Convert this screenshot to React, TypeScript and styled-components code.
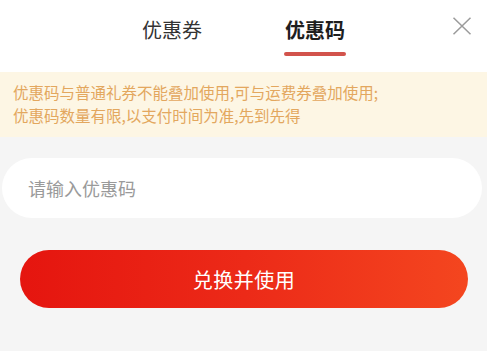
import styled, { createGlobalStyle } from "styled-components";

const GlobalStyle = createGlobalStyle`
  html, body {
    margin: 0;
    padding: 0;
    background: #f5f5f5;
  }
  body {
    font-family: "Noto Sans CJK SC", "Noto Sans", sans-serif;
  }
`;

const tabs = ["优惠券", "优惠码"];

function App() {
  return (
    <Page>
      <GlobalStyle />
      <Header>
        <Tabs>
          {tabs.map((label, index) => (
            <Tab key={label} active={index === 1}>
              <span>{label}</span>
              <Underline active={index === 1} />
            </Tab>
          ))}
        </Tabs>
        <CloseButton aria-label="close">
          <svg width="20" height="18" viewBox="0 0 20 18">
            <path d="M1.5 0.8 L18.5 17.2 M18.5 0.8 L1.5 17.2" stroke="#9b9b9b" strokeWidth="1.5" fill="none" />
          </svg>
        </CloseButton>
      </Header>
      <Notice>
        <p>优惠码与普通礼券不能叠加使用,可与运费券叠加使用;</p>
        <p>优惠码数量有限,以支付时间为准,先到先得</p>
      </Notice>
      <Body>
        <CodeInput placeholder="请输入优惠码" />
        <SubmitButton type="button">兑换并使用</SubmitButton>
      </Body>
    </Page>
  );
}

export default App;

const Page = styled.div`
  width: 487px;
  height: 351px;
  background: #f5f5f5;
  overflow: hidden;
`;

const Header = styled.div`
  display: grid;
  grid-template-columns: 1fr auto 1fr;
  height: 72px;
  background: #fff;
`;

const Tabs = styled.div`
  grid-column: 2;
  display: flex;
  gap: 81px;
  padding-top: 16px;
`;

interface ActiveProps {
  active: boolean;
}

const Tab = styled.div<ActiveProps>`
  display: flex;
  flex-direction: column;
  align-items: center;
  font-size: 20px;
  line-height: 28px;
  color: ${(p) => (p.active ? "#1e1e1e" : "#333")};
  font-weight: ${(p) => (p.active ? 700 : 400)};
`;

const Underline = styled.div<ActiveProps>`
  margin-top: 8px;
  width: 62px;
  height: 3.5px;
  border-radius: 2px;
  background: ${(p) => (p.active ? "#d2534c" : "transparent")};
`;

const CloseButton = styled.button`
  grid-column: 3;
  justify-self: end;
  align-self: start;
  margin: 17px 15px 0 0;
  padding: 0;
  border: none;
  background: none;
  display: flex;
`;

const Notice = styled.div`
  background: #fdf6e4;
  color: #e3a75e;
  font-size: 15.5px;
  line-height: 23px;
  padding: 9px 13px 10px;

  p {
    margin: 0;
    white-space: nowrap;
  }
`;

const Body = styled.div`
  display: flex;
  flex-direction: column;
  padding-top: 21px;
`;

const CodeInput = styled.input`
  box-sizing: border-box;
  margin-left: 2px;
  width: 480px;
  height: 60px;
  border: none;
  outline: none;
  border-radius: 30px;
  background: #fff;
  padding: 0 0 0 26px;
  font-family: "Noto Sans CJK SC", "Noto Sans", sans-serif;
  font-size: 18px;
  color: #333;

  &::placeholder {
    color: #9a9a9a;
  }
`;

const SubmitButton = styled.button`
  margin: 32px 0 0 20px;
  width: 448px;
  height: 58px;
  border: none;
  border-radius: 29px;
  background: linear-gradient(90deg, #e5150f 0%, #ec2a18 50%, #f4461f 100%);
  color: #fff;
  font-family: "Noto Sans CJK SC", "Noto Sans", sans-serif;
  font-size: 20px;
  letter-spacing: 0.5px;
`;
